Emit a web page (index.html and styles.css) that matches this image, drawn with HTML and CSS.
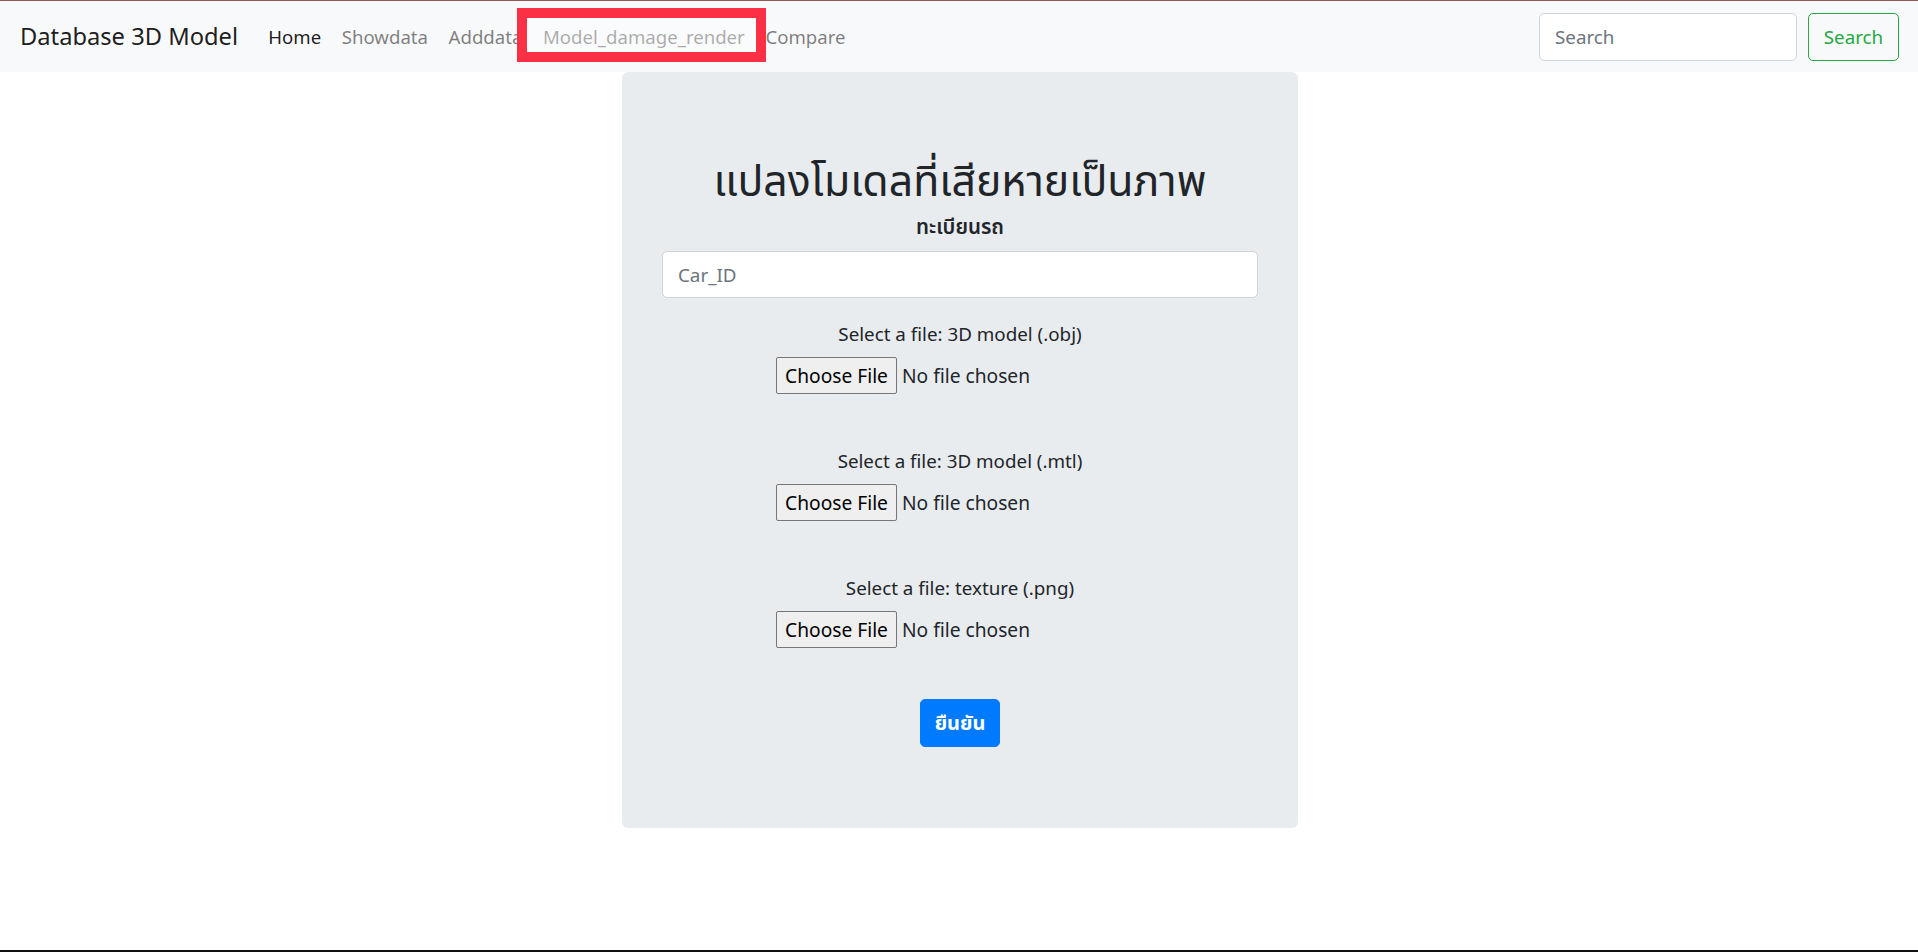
FILE: index.html
```html
<!DOCTYPE html>
<html lang="th">
<head>
<meta charset="utf-8">
<title>Model_damage_render</title>
<link rel="stylesheet" href="styles.css">
</head>
<body>
<div class="page">
  <nav class="navbar">
    <a class="brand" href="#">Database 3D Model</a>
    <ul class="nav-links">
      <li><a class="nav-link active" href="#">Home</a></li>
      <li><a class="nav-link" href="#">Showdata</a></li>
      <li><a class="nav-link" href="#">Adddata</a></li>
      <li><a class="nav-link" href="#">Model_damage_render</a></li>
      <li><a class="nav-link" href="#">Compare</a></li>
    </ul>
    <form class="search-form">
      <input class="search-input" type="search" placeholder="Search">
      <button class="btn-outline" type="button">Search</button>
    </form>
    <div class="highlight"></div>
  </nav>
  <main class="main">
    <form class="card">
      <h1 class="title">แปลงโมเดลที่เสียหายเป็นภาพ</h1>
      <label class="id-label">ทะเบียนรถ</label>
      <input class="text-input" type="text" placeholder="Car_ID">
      <div class="file-group first">
        <label class="file-label">Select a file: 3D model (.obj)</label>
        <input class="file-input" type="file">
      </div>
      <div class="file-group">
        <label class="file-label">Select a file: 3D model (.mtl)</label>
        <input class="file-input" type="file">
      </div>
      <div class="file-group">
        <label class="file-label">Select a file: texture (.png)</label>
        <input class="file-input" type="file">
      </div>
      <button class="btn-primary" type="button">ยืนยัน</button>
    </form>
  </main>
</div>
</body>
</html>
```

FILE: styles.css
```css
* { box-sizing: border-box; }

html, body {
  margin: 0;
  padding: 0;
  background: #fff;
}

body {
  font-family: "Segoe UI", "Noto Sans", "Noto Sans Thai", "Leelawadee UI", Tahoma, sans-serif;
  font-size: 18.8px;
  line-height: 30px;
  color: #212529;
}

.page {
  height: 952px;
  border-top: 1px solid #8e5a5a;
  border-bottom: 2px solid #111;
  overflow: hidden;
  display: flex;
  flex-direction: column;
}

.navbar {
  position: relative;
  height: 71px;
  background: #f8f9fa;
  display: flex;
  align-items: center;
  padding: 0 19px 0 20px;
}

.brand {
  font-size: 23.7px;
  color: rgba(0, 0, 0, 0.9);
  text-decoration: none;
  margin-right: 20px;
  white-space: nowrap;
  line-height: 37px;
}

.nav-links {
  list-style: none;
  margin: 0;
  padding: 0;
  display: flex;
  flex: 1;
}

.nav-link {
  display: block;
  padding: 10px 10.3px;
  font-size: 18.6px;
  color: rgba(0, 0, 0, 0.5);
  text-decoration: none;
  white-space: nowrap;
}

.nav-link.active { color: rgba(0, 0, 0, 0.9); }

.search-form {
  display: flex;
  align-items: center;
}

.search-input {
  width: 258px;
  height: 48px;
  margin-right: 11px;
  padding: 7px 15px;
  font: inherit;
  color: #495057;
  background: #fff;
  border: 1px solid #ced4da;
  border-radius: 5px;
}

.search-input::placeholder { color: #6c757d; }

.btn-outline {
  height: 48px;
  width: 91px;
  font: inherit;
  color: #28a745;
  background: transparent;
  border: 1px solid #28a745;
  border-radius: 5px;
  padding: 0;
}

.highlight {
  position: absolute;
  left: 517px;
  top: 7px;
  width: 249px;
  height: 54px;
  border: 10px solid #fc3044;
  background: rgba(255, 255, 255, 0.35);
  pointer-events: none;
}

.main {
  display: flex;
  justify-content: center;
  padding-left: 2px;
}

.card {
  width: 676px;
  background: #e9ecef;
  border-radius: 6px;
  padding: 78px 40px 81px;
  display: flex;
  flex-direction: column;
  align-items: center;
}

.title {
  margin: 0;
  font-size: 42.8px;
  font-weight: 400;
  line-height: 60px;
  text-align: center;
}

.id-label {
  margin-top: 1px;
  font-size: 20.5px;
  font-weight: 600;
  line-height: 30px;
}

.text-input {
  width: 100%;
  height: 47px;
  margin-top: 10px;
  padding: 7px 15px;
  font: inherit;
  background: #fff;
  border: 1px solid #ced4da;
  border-radius: 5px;
}

.text-input::placeholder { color: #6c757d; }

.file-group {
  display: flex;
  flex-direction: column;
  align-items: center;
  margin-top: 52px;
}

.file-group.first { margin-top: 21px; }

.file-label {
  line-height: 30px;
  margin-bottom: 8px;
}

.file-input {
  width: 364px;
  height: 37px;
  margin-right: 4px;
  font: inherit;
  font-size: 19.2px;
  color: #212529;
}

.file-input::file-selector-button {
  font: inherit;
  height: 37px;
  width: 121px;
  padding: 0;
  margin-right: 5px;
  background: #efefef;
  border: 1px solid #767676;
  border-radius: 2px;
  color: #000;
}

.btn-primary {
  margin-top: 51px;
  width: 80px;
  height: 48px;
  font: inherit;
  font-size: 20px;
  font-weight: 700;
  color: #fff;
  background: #007bff;
  border: 1px solid #007bff;
  border-radius: 5px;
  padding: 0;
}
```
